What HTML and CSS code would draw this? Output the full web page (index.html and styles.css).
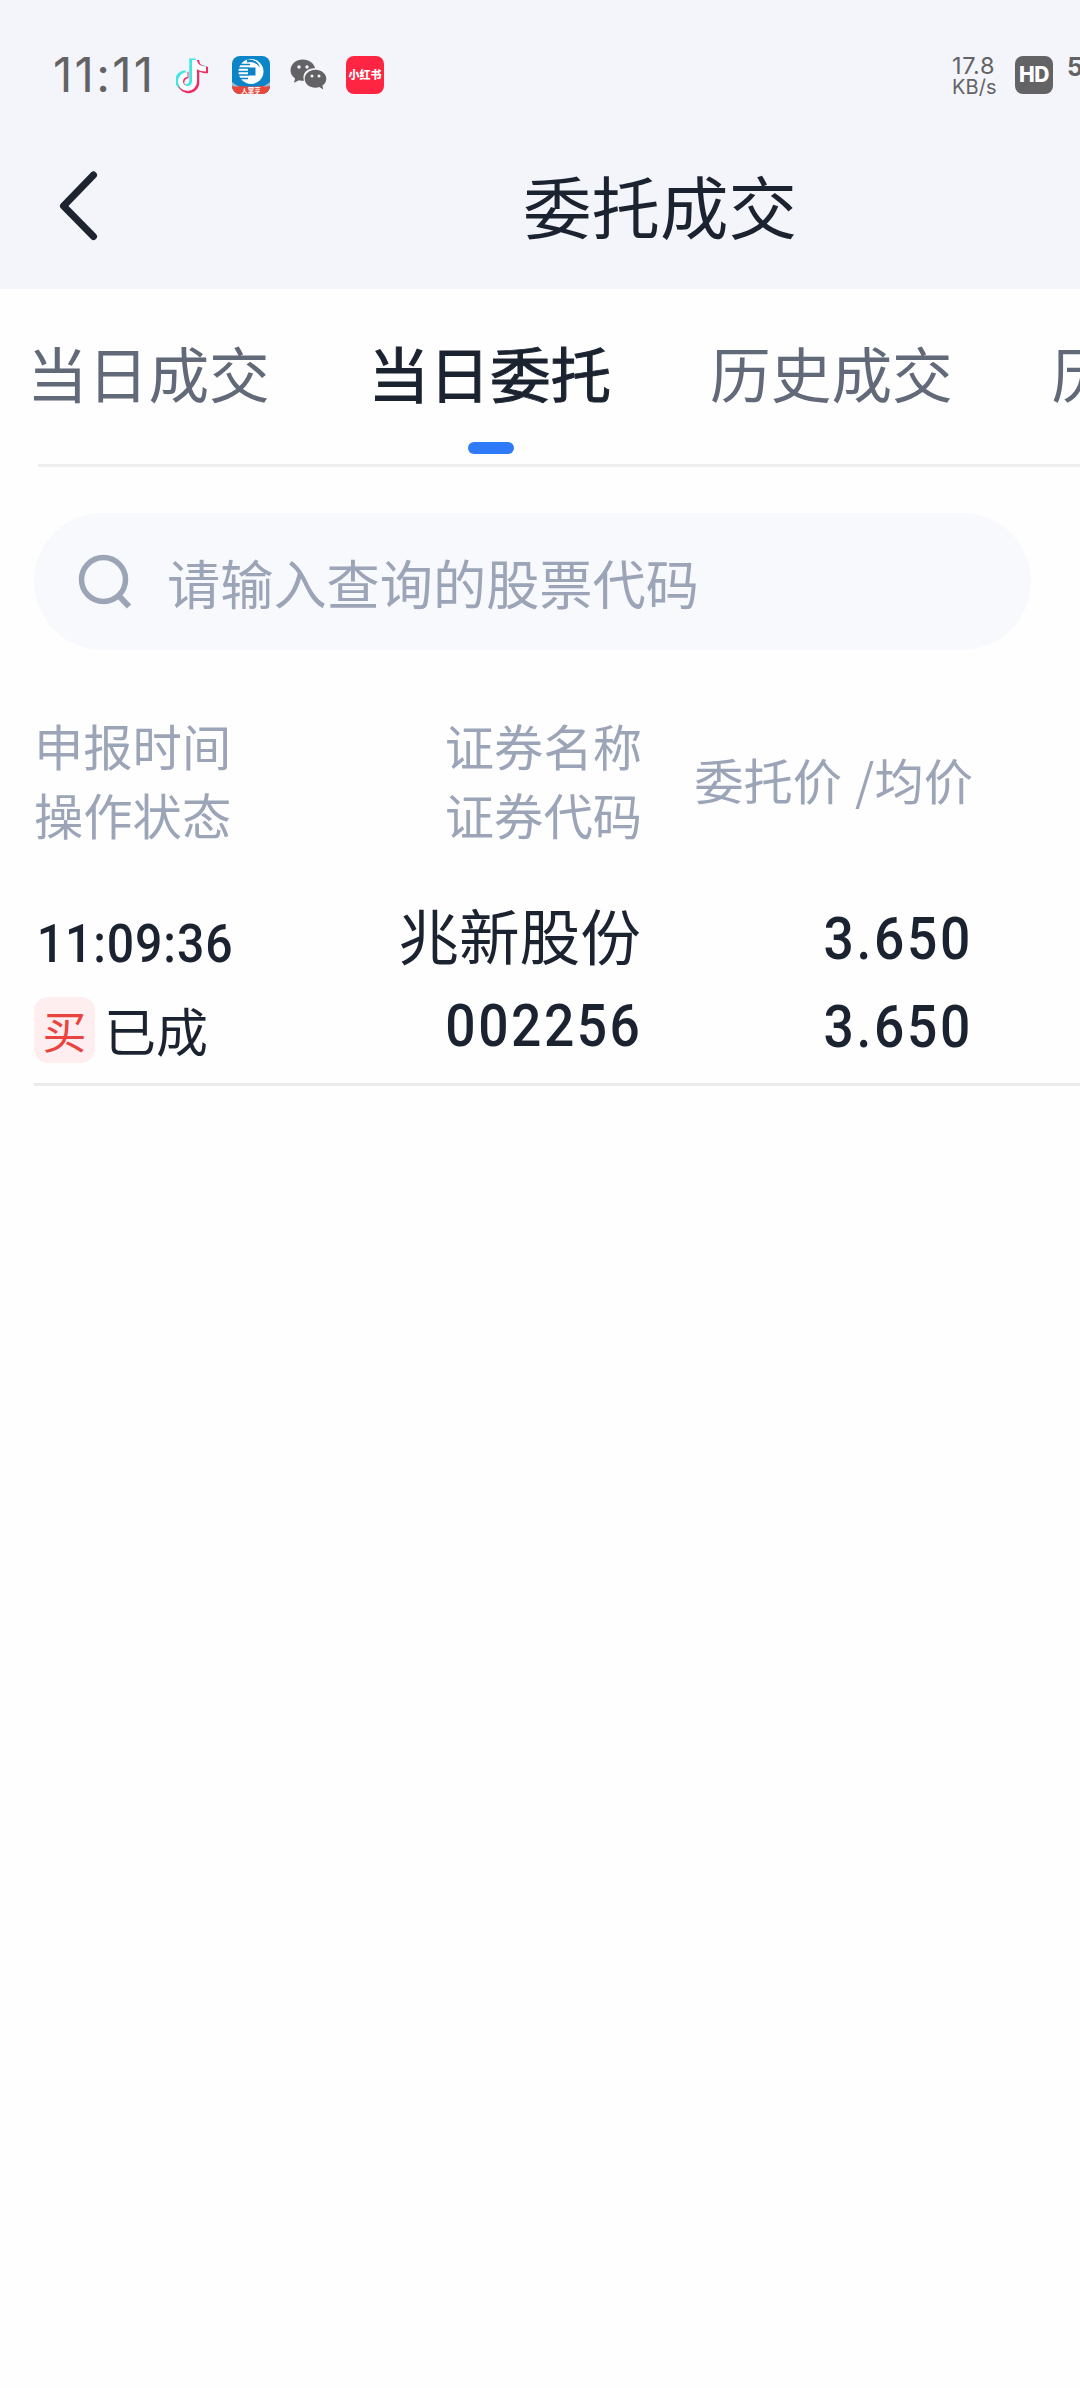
FILE: index.html
```html
<!DOCTYPE html>
<html lang="zh-CN">
<head>
<meta charset="utf-8">
<title>委托成交</title>
<link rel="stylesheet" href="styles.css">
</head>
<body>
<div class="app">
  <header class="header">
    <div class="status">
      <span class="clock">11:11</span>
      <div class="apps">
        <svg class="app-note" width="34" height="38" viewBox="0 0 34 38">
          <g fill="none" stroke-width="6.500">
            <path stroke="#42e6e6" d="M16.500 2.500v22a7 7 0 1 1-7-7M16.500 5c1 5 5 7.500 12 7.500"/>
            <path stroke="#ef2f63" d="M20 4v22.500a7.500 7.500 0 1 1-7.500-7.500M20 6c1 5 5 8 12 8"/>
            <path stroke="#42e6e6" stroke-width="4" d="M16.500 3v21.500a7 7 0 1 1-7-7"/>
            <path stroke="#fff" stroke-width="5" d="M18.500 4v21.500a7 7 0 1 1-7-7M18.500 5c1 5 5 8 11.500 8"/>
          </g>
        </svg>
        <svg class="app-bank" width="38" height="38" viewBox="0 0 38 38">
          <clipPath id="tile"><rect width="38" height="38" rx="8"/></clipPath>
          <g clip-path="url(#tile)">
            <rect width="38" height="38" fill="#0b84c8"/>
            <path fill="#e9463c" d="M0 29q19 3 38 0v9H0z"/>
            <path fill="#9db7cf" d="M0 26l7 5-7-1zM38 26l-7 5 7-1z"/>
            <circle cx="19" cy="15.500" r="12.500" fill="#fff"/>
            <path fill="#0b84c8" d="M16 11.500h7.500v8H16zM15 3.500q10-1 13 8-5-7-13-5z"/>
            <path stroke="#0b84c8" stroke-width="1.300" d="M7 8.500h11M5 12h12M5 15.500h12M5 19h12M7 22.500h9"/>
          </g>
          <text class="bank-label" x="19" y="36.500" text-anchor="middle">人掌亨</text>
        </svg>
        <svg class="app-chat" width="37" height="32" viewBox="0 0 37 32">
          <g fill="#636366">
            <path d="M13 .5C6 .5 .5 5.200 .5 11.200c0 3.400 1.800 6.300 4.600 8.200L4 23.800l5-2.600q2 .6 5 .6C11.500 14 17.500 8.800 25 9.200 24 4 19 .5 13 .5z"/>
            <path d="M25.500 10.700c-6 0-10.800 4-10.800 9s4.800 9 10.800 9q2 0 3.800-.6l4 2.300-.9-3.800c2.400-1.600 3.900-4.100 3.900-6.900 0-5-4.800-9-10.800-9z"/>
          </g>
          <g fill="#f4f5fa"><circle cx="9" cy="8" r="1.700"/><circle cx="17" cy="8" r="1.700"/><circle cx="22" cy="17" r="1.500"/><circle cx="29" cy="17" r="1.500"/></g>
        </svg>
        <span class="app-red">小红书</span>
      </div>
      <div class="net"><span class="speed">17.8</span><span class="unit">KB/s</span></div>
      <span class="hd">HD</span>
      <span class="sig">5</span>
    </div>
    <div class="titlebar">
      <svg class="back" width="42" height="74" viewBox="0 0 42 74"><path d="M36.500 6L6.500 37l30 30.500" fill="none" stroke="#1e2330" stroke-width="7" stroke-linecap="round" stroke-linejoin="round"/></svg>
      <h1 class="title">委托成交</h1>
    </div>
  </header>

  <nav class="tabs">
    <span class="tab">当日成交</span>
    <span class="tab active">当日委托</span>
    <span class="tab">历史成交</span>
    <span class="tab">历史委托</span>
  </nav>

  <div class="search">
    <svg class="glass" width="54" height="56" viewBox="0 0 54 56"><circle cx="25.500" cy="26.500" r="22" fill="none" stroke="#9ca5b5" stroke-width="5.500"/><path d="M41 43l10 10.500" stroke="#9ca5b5" stroke-width="6"/></svg>
    <span class="hint">请输入查询的股票代码</span>
  </div>

  <div class="grid head">
    <div class="cell"><span>申报时间</span><span>操作状态</span></div>
    <div class="cell end"><span>证券名称</span><span>证券代码</span></div>
    <div class="cell end"><span class="price-head">委托价 /均价</span></div>
  </div>

  <div class="grid row">
    <div class="cell">
      <span class="num time">11:09:36</span>
      <div class="state"><span class="badge">买</span><span class="done">已成</span></div>
    </div>
    <div class="cell end"><span class="name">兆新股份</span><span class="num code">002256</span></div>
    <div class="cell end"><span class="num price">3.650</span><span class="num price">3.650</span></div>
  </div>
</div>
</body>
</html>
```
FILE: styles.css
```css
* { box-sizing: border-box; }
body {
  margin: 0;
  background: #fefefe;
  color: #1c2330;
  font-family: "Noto Sans CJK SC", sans-serif;
}
svg { display: block; flex: none; }
.app { width: 1080px; height: 2388px; overflow: hidden; background: #fefefe; }

.header { height: 289px; background: #f4f5fa; }
.status {
  height: 140px;
  padding: 10px 0 0 53px;
  display: flex;
  align-items: center;
  color: #636366;
  white-space: nowrap;
}
.status > * { flex: none; }
.clock { width: 123px; font: 400 47.5px/60px Inter, sans-serif; letter-spacing: 2.3px; }
.apps { width: 776px; display: flex; align-items: center; }
.app-bank { margin-left: 22px; }
.app-chat { margin-left: 20px; }
.bank-label { fill: #fff; font-size: 6.5px; font-weight: 700; }
.app-red {
  width: 38px;
  height: 38px;
  margin-left: 19px;
  border-radius: 8px;
  background: #fd2541;
  color: #fff;
  font-size: 11px;
  font-weight: 900;
  line-height: 37px;
  text-align: center;
}
.net { width: 63px; display: flex; flex-direction: column; font-family: Inter, sans-serif; }
.speed { font-size: 23.5px; line-height: 23px; letter-spacing: 0.6px; }
.unit { font-size: 20px; line-height: 20px; letter-spacing: 0.1px; }
.hd {
  width: 38px;
  height: 38px;
  border-radius: 8px;
  background: #636366;
  color: #fff;
  font: 800 21px/38px Inter, sans-serif;
  text-align: center;
  letter-spacing: -0.5px;
}
.sig { margin: -16px 0 0 14px; font: 700 25px/24px Inter, sans-serif; }

.titlebar { height: 149px; padding-left: 57px; display: flex; align-items: flex-start; }
.back { margin-top: 29px; }
.title { margin: 22px 0 0 424px; font-size: 68.5px; font-weight: 400; line-height: 86px; }

.tabs {
  height: 178px;
  margin-left: 38px;
  border-bottom: 3px solid #eee;
  display: flex;
  gap: 101.5px;
  white-space: nowrap;
}
.tab {
  position: relative;
  left: -11px;
  flex: none;
  width: 240px;
  padding-top: 43px;
  font-size: 60.7px;
  line-height: 80px;
  color: #626979;
}
.tab.active { color: #1c2330; -webkit-text-stroke: 1px #1c2330; }
.tab.active::after {
  content: "";
  position: absolute;
  left: 99px;
  top: 153px;
  width: 46px;
  height: 12px;
  border-radius: 6px;
  background: #2f7af8;
}

.search {
  width: 997px;
  height: 137px;
  margin: 46px 0 0 34px;
  padding-left: 44px;
  border-radius: 69px;
  background: #f8f9fc;
  display: flex;
  align-items: center;
}
.glass { margin-top: -2px; }
.hint { margin: 0 0 0 35px; font-size: 53.2px; line-height: 70px; color: #9ca5b7; }

.grid {
  display: grid;
  grid-template-columns: 300px 308px 331px;
  margin-left: 34px;
}
.cell { display: flex; flex-direction: column; white-space: nowrap; }
.end { align-items: flex-end; }
.head { margin-top: 61px; align-items: center; font-size: 49.3px; line-height: 68.5px; color: #9ca5b7; }
.price-head { word-spacing: 2px; }

.row { margin-top: 48px; height: 190px; border-bottom: 3px solid #ebebeb; }
.num { font-family: Roboto, sans-serif; font-weight: 500; }
.time {
  height: 101px;
  padding: 13px 0 0 3px;
  font-size: 53.5px;
  line-height: 70px;
  letter-spacing: 1px;
  transform: scaleX(0.9);
  transform-origin: left;
}
.state { display: flex; align-items: center; }
.badge {
  width: 61px;
  height: 66px;
  border-radius: 14px;
  background: #feeeef;
  color: #e94440;
  font-size: 44px;
  line-height: 66px;
  text-align: center;
}
.done { margin-left: 9px; font-size: 52px; line-height: 66px; }
.name { height: 87px; padding-right: 1px; font-size: 60.7px; line-height: 76px; }
.code, .price {
  height: 88px;
  font-size: 60px;
  line-height: 85px;
  letter-spacing: 2.8px;
  transform: scaleX(0.89);
  transform-origin: right;
}
.price { letter-spacing: 3px; }
```
